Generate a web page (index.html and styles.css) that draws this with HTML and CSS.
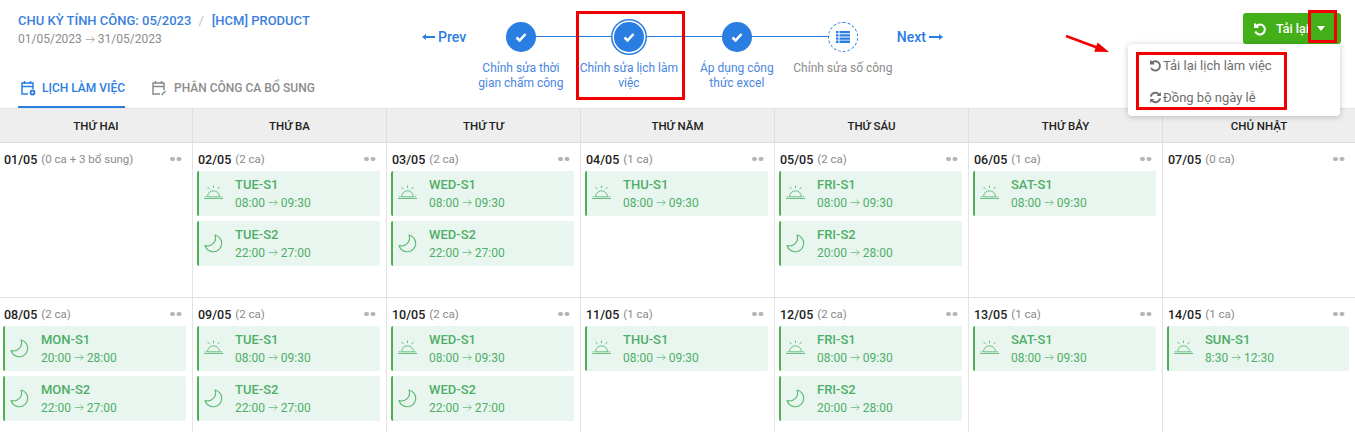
FILE: index.html
```html
<!DOCTYPE html>
<html lang="en">
<head>
<meta charset="UTF-8">
<title>Lịch làm việc</title>
<link rel="stylesheet" href="styles.css">
</head>
<body>
<svg class="defs" width="0" height="0">
  <symbol id="sun" viewBox="0 0 20 20"><path d="M0 14.500h19M3.500 12.800h12M3.500 12.800a6 6 0 0 1 12 0M0.800 12.800h1.700M16.500 12.800h1.700M9.500 1.500V4M3.500 3l2 2.200M15.500 3l-2 2.200" fill="none" stroke="currentColor" stroke-width="0.900"/></symbol>
  <symbol id="moon" viewBox="0 0 20 20"><path d="M11 1A8.500 8.500 0 1 1 1 11.500 8 8 0 0 0 11 1Z" fill="none" stroke="currentColor" stroke-width="1.100" stroke-linejoin="round"/></symbol>
  <symbol id="to" viewBox="0 0 12 10"><path d="M1 5h10M7.500 1.500 11 5 7.500 8.500" fill="none" stroke="currentColor" stroke-width="0.800"/></symbol>
  <symbol id="undo" viewBox="0 0 14 14"><path d="M3 4.200A5 5 0 1 1 2.300 9.500M2 1.500v3.500h3.500" fill="none" stroke="currentColor" stroke-width="2"/></symbol>
  <symbol id="sync" viewBox="0 0 14 14"><path d="M2 6a5 5 0 0 1 8.700-2.300M12 8a5 5 0 0 1-8.700 2.300" fill="none" stroke="currentColor" stroke-width="2"/><path d="M12.800 1v4.500H8.300zM1.200 13V8.500h4.500z" fill="currentColor"/></symbol>
  <symbol id="check" viewBox="0 0 14 14"><path d="M2.500 7.500 5.600 10.500 11.500 4" fill="none" stroke="currentColor" stroke-width="2.600"/></symbol>
</svg>

<header class="top">
  <div class="summary">
    <div class="period"><span>CHU KỲ TÍNH CÔNG: 05/2023</span><i>/</i><span>[HCM] PRODUCT</span></div>
    <div class="range">01/05/2023 <svg class="to"><use href="#to"/></svg> 31/05/2023</div>
    <nav class="tabs">
      <a class="tab active" href="#lich">
        <svg width="16" height="16" viewBox="0 0 16 16" fill="none" stroke="currentColor" stroke-width="1.500"><path d="M8 14H2V3h11v6M2 6.500h11M4.500 1v3M10.500 1v3"/><circle cx="12.500" cy="12.500" r="2" stroke-width="1.800"/></svg>
        LỊCH LÀM VIỆC</a>
      <a class="tab" href="#phan-cong">
        <svg width="16" height="16" viewBox="0 0 16 16" fill="none" stroke="currentColor" stroke-width="1.500"><path d="M9 14H2V3h11v7M2 6.500h11M4.500 1v3M10.500 1v3M10.500 15l4-4"/></svg>
        PHÂN CÔNG CA BỔ SUNG</a>
    </nav>
  </div>

  <div class="wizard">
    <a class="pager" href="#prev"><svg width="13" height="8" viewBox="0 0 13 8"><path d="M0 4 4 1v2h9v2H4v2z" fill="currentColor"/></svg>Prev</a>
    <ol class="steps">
      <li class="step done"><b class="dot"><svg width="14" height="14"><use href="#check"/></svg></b>Chỉnh sửa thời gian chấm công</li>
      <li class="step done current"><b class="dot"><svg width="14" height="14"><use href="#check"/></svg></b>Chỉnh sửa lịch làm việc</li>
      <li class="step done"><b class="dot"><svg width="14" height="14"><use href="#check"/></svg></b>Áp dụng công thức excel</li>
      <li class="step todo"><b class="dot"><svg width="14" height="12" viewBox="0 0 14 12" fill="currentColor"><path d="M0 0h2.500v2.300H0zM3.500 0H14v2.300H3.500zM0 3.200h2.500v2.300H0zM3.500 3.200H14v2.300H3.500zM0 6.400h2.500v2.300H0zM3.500 6.400H14v2.300H3.500zM0 9.600h2.500v2.300H0zM3.500 9.600H14v2.300H3.500z"/></svg></b>Chỉnh sửa số công</li>
    </ol>
    <a class="pager next" href="#next">Next<svg width="14" height="8" viewBox="0 0 14 8"><path d="M14 4 10 1v2H0v2h10v2z" fill="currentColor"/></svg></a>
  </div>

  <div class="actions">
    <div class="reload">
      <svg width="14" height="14"><use href="#undo"/></svg>
      <span>Tải lại</span>
      <b class="caret"></b>
    </div>
    <ul class="menu">
      <li><svg width="13" height="13"><use href="#undo"/></svg>Tải lại lịch làm việc</li>
      <li><svg width="13" height="13"><use href="#sync"/></svg>Đồng bộ ngày lễ</li>
    </ul>
  </div>
</header>

<main class="calendar">
  <div class="weekday">THỨ HAI</div>
  <div class="weekday">THỨ BA</div>
  <div class="weekday">THỨ TƯ</div>
  <div class="weekday">THỨ NĂM</div>
  <div class="weekday">THỨ SÁU</div>
  <div class="weekday">THỨ BẢY</div>
  <div class="weekday">CHỦ NHẬT</div>

  <div class="day">
    <div class="date"><b>01/05</b> <small>(0 ca + 3 bổ sung)</small><em></em></div>
  </div>
  <div class="day">
    <div class="date"><b>02/05</b> <small>(2 ca)</small><em></em></div>
    <div class="shift"><svg><use href="#sun"/></svg><p><b>TUE-S1</b>08:00 <svg class="to"><use href="#to"/></svg> 09:30</p></div>
    <div class="shift"><svg><use href="#moon"/></svg><p><b>TUE-S2</b>22:00 <svg class="to"><use href="#to"/></svg> 27:00</p></div>
  </div>
  <div class="day">
    <div class="date"><b>03/05</b> <small>(2 ca)</small><em></em></div>
    <div class="shift"><svg><use href="#sun"/></svg><p><b>WED-S1</b>08:00 <svg class="to"><use href="#to"/></svg> 09:30</p></div>
    <div class="shift"><svg><use href="#moon"/></svg><p><b>WED-S2</b>22:00 <svg class="to"><use href="#to"/></svg> 27:00</p></div>
  </div>
  <div class="day">
    <div class="date"><b>04/05</b> <small>(1 ca)</small><em></em></div>
    <div class="shift"><svg><use href="#sun"/></svg><p><b>THU-S1</b>08:00 <svg class="to"><use href="#to"/></svg> 09:30</p></div>
  </div>
  <div class="day">
    <div class="date"><b>05/05</b> <small>(2 ca)</small><em></em></div>
    <div class="shift"><svg><use href="#sun"/></svg><p><b>FRI-S1</b>08:00 <svg class="to"><use href="#to"/></svg> 09:30</p></div>
    <div class="shift"><svg><use href="#moon"/></svg><p><b>FRI-S2</b>20:00 <svg class="to"><use href="#to"/></svg> 28:00</p></div>
  </div>
  <div class="day">
    <div class="date"><b>06/05</b> <small>(1 ca)</small><em></em></div>
    <div class="shift"><svg><use href="#sun"/></svg><p><b>SAT-S1</b>08:00 <svg class="to"><use href="#to"/></svg> 09:30</p></div>
  </div>
  <div class="day">
    <div class="date"><b>07/05</b> <small>(0 ca)</small><em></em></div>
  </div>

  <div class="day">
    <div class="date"><b>08/05</b> <small>(2 ca)</small><em></em></div>
    <div class="shift"><svg><use href="#moon"/></svg><p><b>MON-S1</b>20:00 <svg class="to"><use href="#to"/></svg> 28:00</p></div>
    <div class="shift"><svg><use href="#moon"/></svg><p><b>MON-S2</b>22:00 <svg class="to"><use href="#to"/></svg> 27:00</p></div>
  </div>
  <div class="day">
    <div class="date"><b>09/05</b> <small>(2 ca)</small><em></em></div>
    <div class="shift"><svg><use href="#sun"/></svg><p><b>TUE-S1</b>08:00 <svg class="to"><use href="#to"/></svg> 09:30</p></div>
    <div class="shift"><svg><use href="#moon"/></svg><p><b>TUE-S2</b>22:00 <svg class="to"><use href="#to"/></svg> 27:00</p></div>
  </div>
  <div class="day">
    <div class="date"><b>10/05</b> <small>(2 ca)</small><em></em></div>
    <div class="shift"><svg><use href="#sun"/></svg><p><b>WED-S1</b>08:00 <svg class="to"><use href="#to"/></svg> 09:30</p></div>
    <div class="shift"><svg><use href="#moon"/></svg><p><b>WED-S2</b>22:00 <svg class="to"><use href="#to"/></svg> 27:00</p></div>
  </div>
  <div class="day">
    <div class="date"><b>11/05</b> <small>(1 ca)</small><em></em></div>
    <div class="shift"><svg><use href="#sun"/></svg><p><b>THU-S1</b>08:00 <svg class="to"><use href="#to"/></svg> 09:30</p></div>
  </div>
  <div class="day">
    <div class="date"><b>12/05</b> <small>(2 ca)</small><em></em></div>
    <div class="shift"><svg><use href="#sun"/></svg><p><b>FRI-S1</b>08:00 <svg class="to"><use href="#to"/></svg> 09:30</p></div>
    <div class="shift"><svg><use href="#moon"/></svg><p><b>FRI-S2</b>20:00 <svg class="to"><use href="#to"/></svg> 28:00</p></div>
  </div>
  <div class="day">
    <div class="date"><b>13/05</b> <small>(1 ca)</small><em></em></div>
    <div class="shift"><svg><use href="#sun"/></svg><p><b>SAT-S1</b>08:00 <svg class="to"><use href="#to"/></svg> 09:30</p></div>
  </div>
  <div class="day">
    <div class="date"><b>14/05</b> <small>(1 ca)</small><em></em></div>
    <div class="shift"><svg><use href="#sun"/></svg><p><b>SUN-S1</b>8:30 <svg class="to"><use href="#to"/></svg> 12:30</p></div>
  </div>
</main>

<!-- red marks drawn on the screenshot -->
<div class="mark mark-step"></div>
<div class="mark mark-caret"></div>
<div class="mark mark-menu"></div>
<svg class="pointer" width="50" height="22" viewBox="0 0 50 22"><path d="M1 2 32 13.500" stroke="#f00000" stroke-width="2.500"/><path d="M44 18 29.200 17.800 32.600 8.400z" fill="#f00000"/></svg>
</body>
</html>
```

FILE: styles.css
```css
* {
  box-sizing: border-box;
}

html, body {
  height: 100%;
  overflow: hidden;
}

body {
  position: relative;
  margin: 0;
  background: #fff;
  color: #212121;
  font-family: Roboto, "Liberation Sans", sans-serif;
  font-size: 13px;
}

a {
  text-decoration: none;
}

.defs {
  position: absolute;
}

.to {
  width: 10px;
  height: 9px;
  vertical-align: -0.5px;
}

/* top bar */
.top {
  display: flex;
  height: 108px;
}

.summary {
  width: 422px;
  padding: 13px 0 0 18px;
}

.period {
  color: #3b7fdc;
  font-size: 13px;
  font-weight: 500;
  line-height: 16px;
}

.period i {
  margin: 0 8px 0 7px;
  color: #bdbdbd;
  font-style: normal;
  font-weight: 400;
}

.range {
  margin-top: 2px;
  color: #8c8c8c;
  font-size: 12px;
  line-height: 16px;
}

.tabs {
  display: flex;
  gap: 25px;
  margin-top: 29px;
}

.tab {
  display: flex;
  align-items: center;
  gap: 7px;
  height: 32px;
  padding: 0 0 8px 1px;
  color: #8c8c8c;
  font-size: 12px;
  font-weight: 500;
}

.tab.active {
  gap: 6px;
  padding-bottom: 6px;
  padding-left: 2px;
  border-bottom: 2px solid #2a7de1;
  color: #2a7de1;
}

.wizard {
  display: flex;
  align-items: flex-start;
  width: 521px;
}

.pager {
  display: flex;
  align-items: center;
  gap: 3px;
  margin-top: 28px;
  width: 45px;
  color: #2a7de1;
  font-size: 14px;
  font-weight: 500;
  line-height: 18px;
  white-space: nowrap;
}

.next {
  margin-left: 2px;
  width: auto;
}

.steps {
  display: flex;
  width: 428px;
  margin: 0;
  padding: 0;
  list-style: none;
}

.step {
  position: relative;
  display: flex;
  flex-direction: column;
  align-items: center;
  width: 108px;
  padding: 22px 4px 0;
  color: #4a86e0;
  font-size: 12px;
  line-height: 15px;
  text-align: center;
}

.step:last-child {
  width: 104px;
  padding: 22px 0 0;
}

/* connector to the next step */
.step::after {
  content: "";
  position: absolute;
  top: 36px;
  left: 54px;
  width: 108px;
  height: 1px;
  background: #2a7de1;
}

.step:last-child::after {
  display: none;
}

.dot {
  position: relative;
  z-index: 1;
  display: flex;
  align-items: center;
  justify-content: center;
  width: 30px;
  height: 30px;
  margin-bottom: 9px;
  border-radius: 50%;
  background: #2a7de1;
  color: #fff;
}

.current .dot {
  box-shadow: 0 0 0 1.500px #fff, 0 0 0 3px #2a7de1;
}

.todo {
  color: #8c8c8c;
}

.todo .dot {
  border: 1px dashed #2a7de1;
  background: #fff;
  color: #2a7de1;
}

.actions {
  position: relative;
  flex: 1;
}

.reload {
  position: absolute;
  top: 13px;
  right: 14px;
  display: flex;
  align-items: center;
  width: 98px;
  height: 31px;
  padding-left: 10px;
  border-radius: 3px;
  background: #43b01a;
  color: #fff;
  font-size: 12.500px;
  font-weight: 500;
}

.reload span {
  margin-left: 9px;
}

.caret {
  margin-left: 8px;
  border: 4.500px solid transparent;
  border-top: 5px solid #fff;
  border-bottom: 0;
}

.menu {
  position: absolute;
  top: 44px;
  right: 15px;
  width: 212px;
  height: 72px;
  margin: 0;
  padding: 5px 0 0 21px;
  border-radius: 4px;
  background: #fff;
  box-shadow: 0 1px 6px rgba(0, 0, 0, 0.22);
  color: #6e6e6e;
  list-style: none;
  z-index: 2;
}

.menu li {
  display: flex;
  align-items: center;
  gap: 1px;
  height: 32px;
}

/* calendar */
.calendar {
  display: grid;
  grid-template-columns: 193px repeat(5, 194px) 1fr;
  grid-template-rows: 35px;
  grid-auto-rows: 155px;
}

.weekday {
  display: flex;
  align-items: center;
  justify-content: center;
  border-top: 1px solid #e3e3e3;
  border-right: 1px solid #dedede;
  border-bottom: 1px solid #dedede;
  background: #eeeeee;
  font-size: 11.500px;
  font-weight: 500;
}

.weekday:nth-child(7) {
  border-right: 0;
}

.day {
  padding: 9px 6px 0 4px;
  border-right: 1px solid #e3e3e3;
  border-bottom: 1px solid #e3e3e3;
}

.day:nth-child(7n) {
  border-right: 0;
}

.day:nth-child(7n + 1) {
  padding-left: 3px;
}

.date {
  display: flex;
  align-items: center;
  gap: 4px;
  height: 14px;
  margin-bottom: 5px;
  padding-left: 1px;
}

.date b {
  color: #212121;
  font-size: 12.500px;
  font-weight: 500;
}

.date small {
  color: #8a8a8a;
  font-size: 11.500px;
}

/* the two grey dots at the end of a date row */
.date em {
  width: 4.500px;
  height: 4.500px;
  margin-left: auto;
  margin-right: 11.500px;
  border-radius: 50%;
  background: #b5b5b5;
  box-shadow: 6.500px 0 #b5b5b5;
}

.shift {
  display: flex;
  align-items: center;
  height: 45px;
  margin-bottom: 5px;
  border-left: 2px solid #4caf50;
  border-radius: 2px;
  background: #e9f6ef;
  color: #4fae68;
}

.shift > svg {
  width: 20px;
  height: 20px;
  margin: 0 11px 0 5px;
  color: #5cb973;
}

.shift p {
  margin: 0;
  font-size: 12px;
  line-height: 18px;
}

.shift b {
  display: block;
  font-size: 13px;
  font-weight: 500;
}

/* annotations */
.mark {
  position: absolute;
  border: 3px solid #f00000;
  z-index: 3;
}

.mark-step {
  top: 11px;
  left: 576px;
  width: 109px;
  height: 89px;
}

.mark-caret {
  top: 10px;
  left: 1308px;
  width: 29px;
  height: 33px;
}

.mark-menu {
  top: 52px;
  left: 1136px;
  width: 151px;
  height: 58px;
}

.pointer {
  position: absolute;
  top: 34px;
  left: 1065px;
}
```
